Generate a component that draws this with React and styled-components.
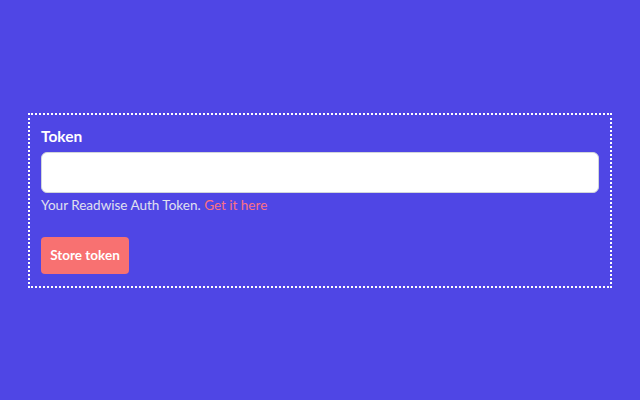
import React from "react";
import styled, { createGlobalStyle } from "styled-components";

const Global = createGlobalStyle`
  html, body { margin: 0; padding: 0; background: #4f46e5; }
  body { font-family: Lato, "Noto Sans", sans-serif; }
`;

const Page = styled.div`
  height: 400px;
  box-sizing: border-box;
  padding: 0 28px;
  display: flex;
  align-items: center;
`;

const Form = styled.form`
  flex: 1;
  box-sizing: border-box;
  height: 175px;
  border: 2px dotted #ffffff;
  padding: 11px 11px 12px;
  display: flex;
  flex-direction: column;
`;

const Label = styled.label`
  color: #ffffff;
  font-weight: 700;
  font-size: 15.5px;
  line-height: 20px;
  margin: 0 0 6px;
`;

const Input = styled.input`
  box-sizing: border-box;
  height: 41px;
  width: 100%;
  border: 1px solid #d1d5db;
  border-radius: 6px;
  background: #ffffff;
  outline: none;
  font-size: 14px;
  padding: 0 10px;
`;

const Help = styled.p`
  margin: 3px 0 0;
  color: #e0e0f0;
  font-size: 13.5px;
  line-height: 19px;
`;

const Link = styled.a`
  color: #fb7185;
  text-decoration: none;
`;

const Button = styled.button`
  margin-top: auto;
  align-self: flex-start;
  height: 37px;
  width: 88px;
  border: none;
  border-radius: 4px;
  background: #f87171;
  color: #ffffff;
  font-family: inherit;
  font-weight: 700;
  font-size: 13.5px;
  cursor: pointer;
`;

export default function App() {
  return (
    <>
      <Global />
      <Page>
        <Form onSubmit={(e) => e.preventDefault()}>
          <Label>Token</Label>
          <Input type="text" />
          <Help>
            Your Readwise Auth Token. <Link href="#">Get it here</Link>
          </Help>
          <Button type="submit">Store token</Button>
        </Form>
      </Page>
    </>
  );
}
